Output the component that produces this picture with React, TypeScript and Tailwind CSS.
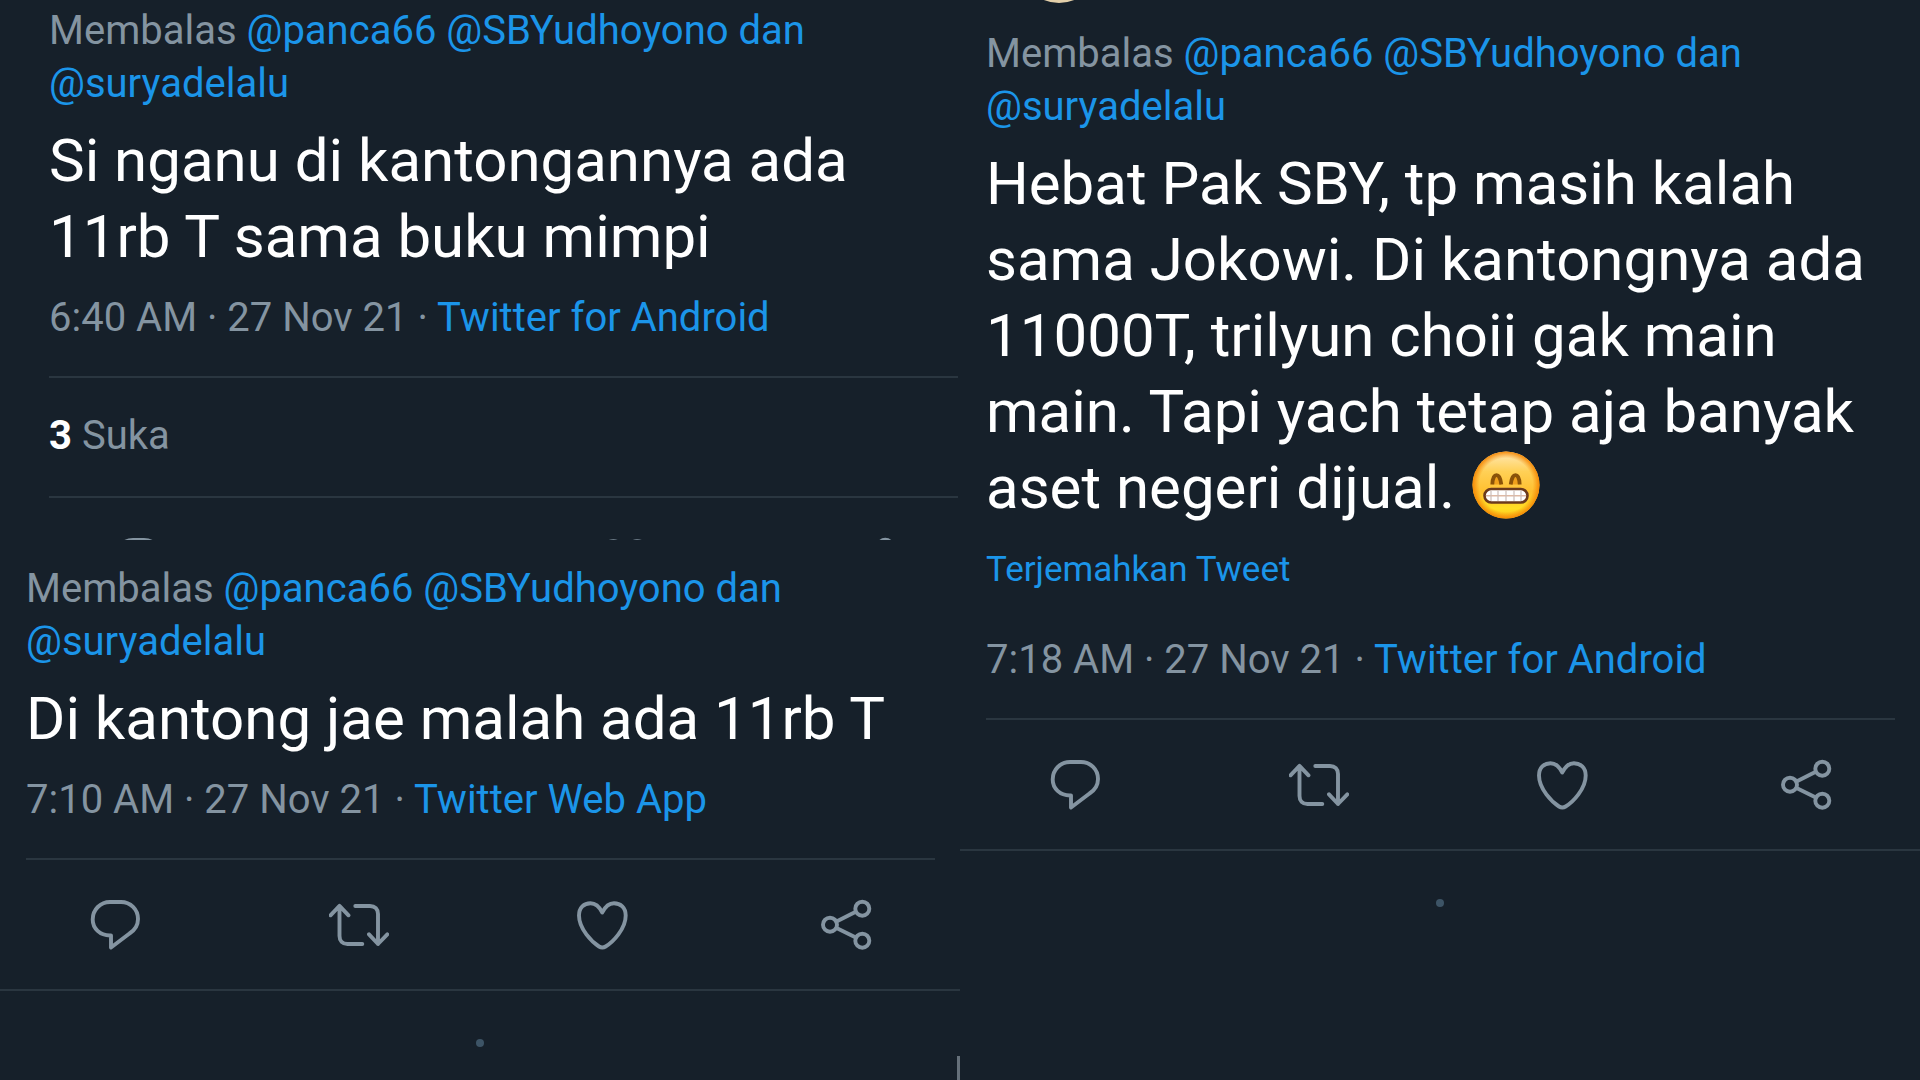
import type { ReactNode } from 'react';

type TweetProps = {
  text: string;
  time: string;
  source: string;
  emoji?: boolean;
  translate?: boolean;
  children?: ReactNode;
};

function Icon({ label, children }: { label: string; children: ReactNode }) {
  return (
    <button type="button" aria-label={label} className="size-[60px] shrink-0">
      <svg
        viewBox="0 0 60 60"
        className="size-full"
        fill="none"
        stroke="currentColor"
        strokeWidth="3.9"
        strokeLinecap="round"
        strokeLinejoin="round"
      >
        {children}
      </svg>
    </button>
  );
}

function Actions() {
  return (
    <div className="flex justify-between px-[59px] pt-[34px] pb-[35px] text-[#8494a1]">
      <Icon label="Balas">
        <path d="M25 8H36C45.5 8 53 15.5 53 25C53 31 50 36 44.5 39.5L26 53.5V41.5H25C15 41.5 7.7 34.5 7.7 25.5C7.7 15.5 15.5 8 25 8Z" />
      </Icon>
      <Icon label="Retweet">
        <path d="M1.5 21.3L10.5 11.8L19.5 21.3M10.5 12V42C10.5 47 13.5 50 18.5 50H33.3" />
        <path d="M26.3 12H41C46 12 49 15 49 20V50M40 40.3L49 50L58.3 40.3" />
      </Icon>
      <Icon label="Suka">
        <path d="M30.3 18.5C27 12 22.5 9.2 18.5 9.2C12 9.2 7 13.5 7 21.5C7 35 20 48 27 52.5C29.3 54 31.3 54 33.6 52.5C41 48 53.7 35 53.7 21.5C53.7 13.5 48.5 9.2 42 9.2C38 9.2 33.5 12 30.3 18.5Z" />
      </Icon>
      <Icon label="Bagikan">
        <circle cx="14" cy="30.7" r="7" />
        <circle cx="46.3" cy="14.7" r="7" />
        <circle cx="46.3" cy="46.7" r="7" />
        <path d="M20.5 27.4L39.8 17.8M20.5 34L39.8 43.4" />
      </Icon>
    </div>
  );
}

function GrinEmoji() {
  return (
    <svg
      viewBox="0 0 68 68"
      role="img"
      aria-label="😁"
      className="-mt-[23px] -mb-[9px] ml-0.5 inline-block size-[68px] align-middle"
    >
      <defs>
        <linearGradient id="face" x1="0" y1="0" x2="0" y2="1">
          <stop offset="0" stopColor="#ffe9b8" />
          <stop offset="0.3" stopColor="#ffd056" />
          <stop offset="0.6" stopColor="#ffc02f" />
          <stop offset="0.85" stopColor="#ffdf25" />
          <stop offset="1" stopColor="#fdc21d" />
        </linearGradient>
        <radialGradient id="rim">
          <stop offset="0.8" stopColor="#f58a07" stopOpacity="0" />
          <stop offset="1" stopColor="#f58a07" />
        </radialGradient>
      </defs>
      <circle cx="34" cy="34" r="33.5" fill="url(#face)" />
      <circle cx="34" cy="34" r="33.5" fill="url(#rim)" />
      <g fill="#f0a01c" stroke="#8a5209" strokeWidth="3.8">
        <path d="M20.3 33.5C20.8 21 28 21 29.3 33.5" />
        <path d="M38.7 33.5C40 21 47.2 21 47.7 33.5" />
      </g>
      <rect x="12.5" y="38" width="43" height="13.5" rx="6.7" fill="#fff" stroke="#6b3a1c" strokeWidth="2.6" />
      <path d="M14 44.8H54" stroke="#dfb9a4" strokeWidth="1.4" />
      <path d="M19 39.5V50M26 39.5V50M34 39.5V50M42 39.5V50M49 39.5V50" stroke="#cbbdb8" strokeWidth="1.2" />
    </svg>
  );
}

function Divider() {
  return <hr className="border-t-2 border-[#2a3640]" />;
}

function Tweet({ text, time, source, emoji, translate, children }: TweetProps) {
  return (
    <article>
      <p className="text-[40px] leading-[53px] text-[#8494a1]">
        Membalas{' '}
        <span className="text-[#1b95e9]">
          <a href="#panca66">@panca66</a> <a href="#SBYudhoyono">@SBYudhoyono</a> <a href="#replies">dan</a>
          <br />
          <a href="#suryadelalu">@suryadelalu</a>
        </span>
      </p>
      <p className="mt-[13px] text-[60px] leading-[76px] text-white">
        {text} {emoji && <GrinEmoji />}
      </p>
      {translate && (
        <a href="#translate" className="mt-[17px] mb-[37px] block text-[35px] leading-[53px] text-[#1b95e9]">
          Terjemahkan Tweet
        </a>
      )}
      <p className="mt-4 mb-8 text-[40px] leading-[53px] text-[#8494a1]">
        {time} · 27 Nov 21 ·{' '}
        <a href="#source" className="text-[#1b95e9]">{source}</a>
      </p>
      <Divider />
      {children}
    </article>
  );
}

function PageDot() {
  return <div className="mx-auto mt-12 size-2 rounded-full bg-[#3d5466]" />;
}

export default function App() {
  return (
    <main className="grid min-h-screen grid-cols-2 bg-[#16202a] font-[Roboto,sans-serif]">
      <div className="flex flex-col">
        {/* First reply, cut off at the top of its action row */}
        <section className="pt-1 pr-[2px] pl-[49px]">
          <Tweet text="Si nganu di kantongannya ada 11rb T sama buku mimpi" time="6:40 AM" source="Twitter for Android">
            <p className="mt-[31px] mb-[34px] text-[40px] leading-[53px] text-[#8494a1]">
              <b className="font-bold text-white">3</b> Suka
            </p>
            <Divider />
            <div className="h-[42px] overflow-hidden">
              <Actions />
            </div>
          </Tweet>
        </section>

        {/* Second reply */}
        <section className="relative flex-1 pt-[22px]">
          <div className="pr-[25px] pl-[26px]">
            <Tweet text="Di kantong jae malah ada 11rb T" time="7:10 AM" source="Twitter Web App">
              <Actions />
            </Tweet>
          </div>
          <Divider />
          <PageDot />
          <div className="absolute right-0 bottom-0 h-6 w-[3px] bg-[#65707a]" />
        </section>
      </div>

      {/* Third reply */}
      <section className="relative overflow-hidden pt-[27px]">
        <div className="absolute -top-[77px] left-[59px] size-20 rounded-full bg-[#e3cfa9]" />
        <div className="pr-[25px] pl-[26px]">
          <Tweet
            text="Hebat Pak SBY, tp masih kalah sama Jokowi. Di kantongnya ada 11000T, trilyun choii gak main main. Tapi yach tetap aja banyak aset negeri dijual."
            time="7:18 AM"
            source="Twitter for Android"
            emoji
            translate
          >
            <Actions />
          </Tweet>
        </div>
        <Divider />
        <PageDot />
      </section>
    </main>
  );
}
